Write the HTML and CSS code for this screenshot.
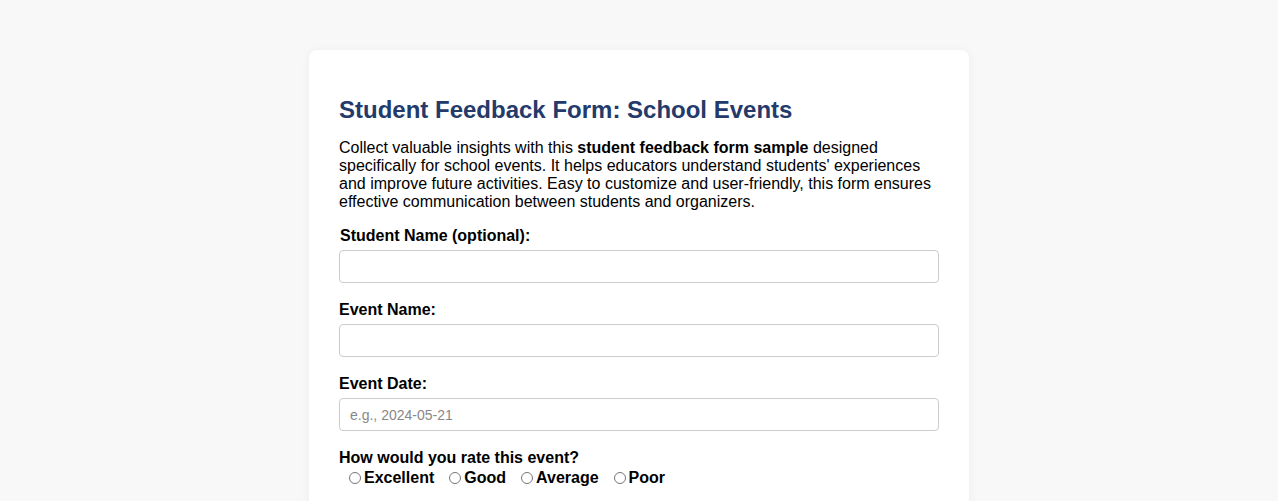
FILE: index.html
```html
<!DOCTYPE html>
<html lang="en">
<head>
    <meta charset="UTF-8">
    <meta name="viewport" content="width=device-width, initial-scale=1.0">
    <title>Student Feedback Form: School Events</title>
    <link rel="stylesheet" href="styles.css">
</head>
<body>
    <div class="container">
        <h1>Student Feedback Form: School Events</h1>
        <p class="intro">Collect valuable insights with this <strong>student feedback form sample</strong> designed specifically for school events. It helps educators understand students' experiences and improve future activities. Easy to customize and user-friendly, this form ensures effective communication between students and organizers.</p>
        <form id="feedback-form">
            <label for="student-name" class="indent">Student Name (optional):</label>
            <input type="text" id="student-name" name="student-name">

            <label for="event-name">Event Name:</label>
            <input type="text" id="event-name" name="event-name" required>

            <label for="event-date">Event Date:</label>
            <input type="text" id="event-date" name="event-date" placeholder="e.g., 2024-05-21">

            <label class="group-label">How would you rate this event?</label>
            <div class="rating">
                <label><input type="radio" name="rating" value="excellent">Excellent</label>
                <label><input type="radio" name="rating" value="good">Good</label>
                <label><input type="radio" name="rating" value="average">Average</label>
                <label><input type="radio" name="rating" value="poor">Poor</label>
            </div>
        </form>
    </div>
</body>
</html>
```

FILE: styles.css
```css
body {
    margin: 0;
    font-family: Arial, "Liberation Sans", sans-serif;
    background-color: #f8f8f8;
    color: #000;
}
.container {
    width: 600px;
    margin: 50px auto 0;
    padding: 30px;
    background-color: #fff;
    border-radius: 8px;
    box-shadow: 0 0 10px rgba(0, 0, 0, 0.05);
}
h1 {
    margin: 16px 0 15px;
    font-size: 24px;
    color: #243a6b;
}
.intro {
    margin: 0 0 16px;
    font-size: 16px;
}
#feedback-form label {
    display: block;
    font-weight: bold;
    font-size: 16px;
    margin-bottom: 5px;
}
#feedback-form label.indent {
    padding-left: 1px;
}
#feedback-form input[type="text"] {
    display: block;
    width: 100%;
    box-sizing: border-box;
    height: 33px;
    padding: 8px 10px;
    margin-bottom: 18px;
    border: 1px solid #ccc;
    border-radius: 4px;
    font-family: Arial, "Liberation Sans", sans-serif;
    font-size: 14px;
}
#feedback-form input::placeholder {
    color: #888;
}
#feedback-form .group-label {
    margin-bottom: 2px;
}
.rating {
    display: flex;
    gap: 10px;
    padding-left: 5px;
}
.rating label {
    display: flex !important;
    align-items: center;
    margin: 0 !important;
}
.rating input {
    width: 12px;
    height: 12px;
    margin: 0 3px 0 5px;
}
```
